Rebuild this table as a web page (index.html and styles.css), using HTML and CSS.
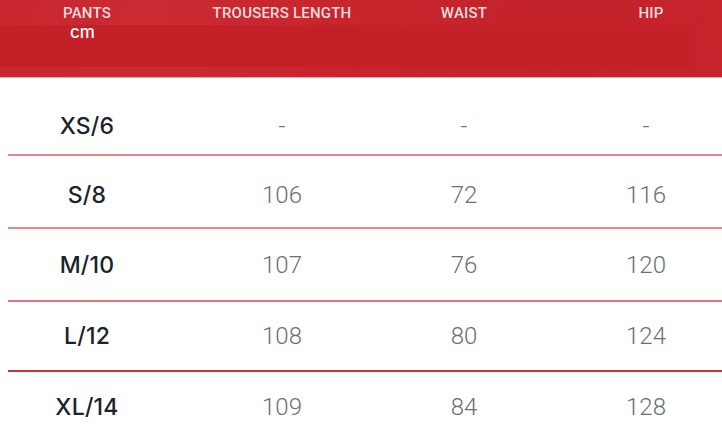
FILE: index.html
```html
<!DOCTYPE html>
<html lang="en">
<head>
<meta charset="utf-8">
<title>Pants size chart</title>
<link rel="stylesheet" href="styles.css">
</head>
<body>
<div class="sheet">
  <header class="head">
    <div class="grid head-titles">
      <span class="cell c1">PANTS</span>
      <span class="cell">TROUSERS LENGTH</span>
      <span class="cell">WAIST</span>
      <span class="cell c4">HIP</span>
    </div>
    <div class="head-band"><span class="unit">cm</span></div>
  </header>
  <div class="rows">
    <div class="grid row row-1 line-light">
      <span class="cell c1 size">XS/6</span>
      <span class="cell val">-</span>
      <span class="cell val">-</span>
      <span class="cell val">-</span>
    </div>
    <div class="grid row row-2 line-light">
      <span class="cell c1 size">S/8</span>
      <span class="cell val">106</span>
      <span class="cell val">72</span>
      <span class="cell val">116</span>
    </div>
    <div class="grid row row-3 line-mid">
      <span class="cell c1 size">M/10</span>
      <span class="cell val">107</span>
      <span class="cell val">76</span>
      <span class="cell val">120</span>
    </div>
    <div class="grid row row-4 line-dark">
      <span class="cell c1 size">L/12</span>
      <span class="cell val">108</span>
      <span class="cell val">80</span>
      <span class="cell val">124</span>
    </div>
    <div class="grid row row-5">
      <span class="cell c1 size">XL/14</span>
      <span class="cell val">109</span>
      <span class="cell val">84</span>
      <span class="cell val">128</span>
    </div>
  </div>
</div>
</body>
</html>
```

FILE: styles.css
```css
html, body {
  margin: 0;
  padding: 0;
  background: #ffffff;
  overflow: hidden;
}

.sheet {
  width: 722px;
  height: 437px;
  overflow: hidden;
  font-family: Roboto, "Liberation Sans", Arial, sans-serif;
}

.grid {
  display: grid;
  grid-template-columns: 183px 182px 182px 182px;
  margin-left: 8px;
  width: 729px;
}

.cell {
  display: block;
  text-align: center;
}

.c1 {
  padding-right: 25px;
}

/* header */
.head {
  background: #c8242c;
  background-image:
    radial-gradient(circle at 20% 30%, rgba(255,255,255,0.03), transparent 40%),
    radial-gradient(circle at 80% 70%, rgba(0,0,0,0.03), transparent 40%);
  height: 77px;
  border-bottom: 1px solid #efa3a6;
  display: flex;
  flex-direction: column;
}

.head-titles {
  height: 25px;
  box-sizing: border-box;
  padding-top: 2px;
  font-size: 15px;
  font-weight: 500;
  line-height: 23px;
  color: #f3dcdc;
  letter-spacing: 0.2px;
}

.head-titles .c4 {
  padding-left: 10px;
}

.head-band {
  width: 689px;
  height: 42px;
  background: #c32028;
  box-sizing: border-box;
  padding-left: 70px;
}

.unit {
  display: block;
  font-family: Inter, Roboto, sans-serif;
  font-size: 17px;
  font-weight: 500;
  line-height: 14px;
  color: #ffffff;
}

/* rows */
.row {
  align-items: center;
  box-sizing: border-box;
  font-size: 24px;
  line-height: 24px;
}

.row-1 { height: 78px; padding-top: 20px; }
.row-2 { height: 73px; padding-top: 6px; }
.row-3 { height: 73px; }
.row-4 { height: 70px; }
.row-5 { height: 70px; }

.line-light { border-bottom: 2px solid #e8878a; }
.line-mid { border-bottom: 2px solid #df7579; }
.line-dark { border-bottom: 2px solid #c7353b; }

.size {
  font-family: Inter, Roboto, sans-serif;
  font-size: 23px;
  font-weight: 500;
  color: #1a232d;
  letter-spacing: 0.2px;
}

.val {
  font-weight: 300;
  color: #6c7075;
}
```
